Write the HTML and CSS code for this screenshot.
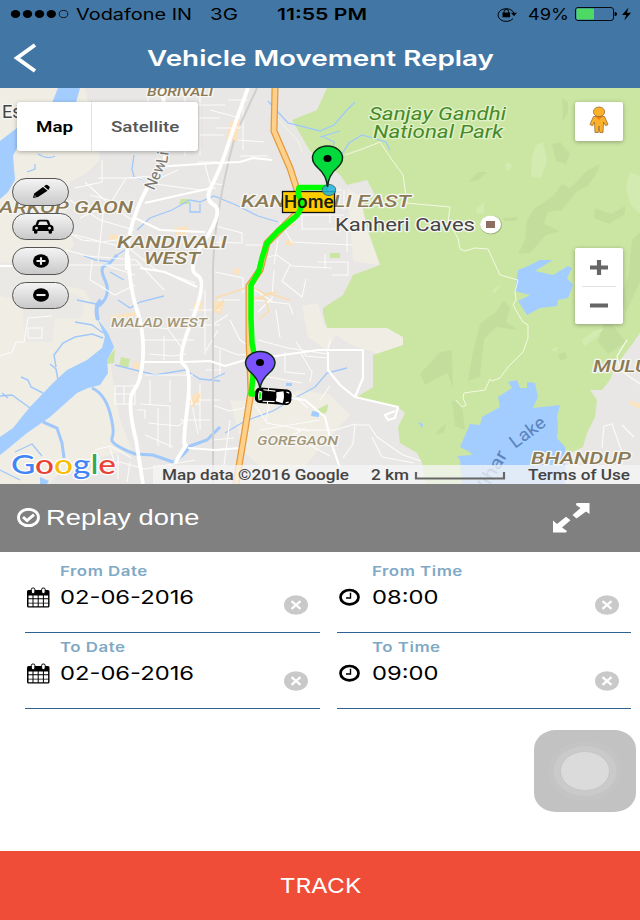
FILE: index.html
```html
<!DOCTYPE html>
<html lang="en">
<head>
    <meta charset="UTF-8">
    <meta name="viewport" content="width=device-width, initial-scale=1.0">
    <title>Vehicle Movement Replay</title>
    <link rel="stylesheet" href="styles.css">
</head>
<body>

    <div class="app">
        <header class="header">
            <div class="status">
                <svg class="signal" width="60" height="12" viewBox="0 0 60 12">
                    <ellipse cx="5.5" cy="6" rx="4.7" ry="4"/><ellipse cx="17.5" cy="6" rx="4.7" ry="4"/>
                    <ellipse cx="29.5" cy="6" rx="4.7" ry="4"/><ellipse cx="41.3" cy="6" rx="4.7" ry="4"/>
                    <ellipse cx="53.5" cy="6" rx="4.3" ry="3.6" fill="none" stroke="#000" stroke-width=".8"/>
                </svg>
                <svg class="status-text" width="420" height="28" viewBox="70 0 420 28">
                    <text x="76" y="20" textLength="116" lengthAdjust="spacingAndGlyphs">Vodafone IN</text>
                    <text x="210" y="20" textLength="28" lengthAdjust="spacingAndGlyphs">3G</text>
                    <text class="time" x="277" y="20" textLength="90" lengthAdjust="spacingAndGlyphs">11:55 PM</text>
                </svg>
                <svg class="battery" width="144" height="28" viewBox="490 0 144 28">
                    <path d="M513 18.600a8.200 6.400 0 1 1 1-5.500" fill="none" stroke="#000" stroke-width="1"/>
                    <path d="M511 12.700h6l-3 3.600z"/>
                    <path d="M502.500 12.500h7.600v4.800h-7.600z"/>
                    <path d="M504 13v-1.500a2.300 2 0 0 1 4.600 0V13" fill="none" stroke="#000" stroke-width="1"/>
                    <text x="528" y="20" textLength="41" lengthAdjust="spacingAndGlyphs">49%</text>
                    <rect x="575.5" y="7.5" width="38" height="13" rx="2.5" fill="none" stroke="#000" stroke-width=".9"/>
                    <rect x="576.5" y="8.5" width="17.5" height="11" rx="1" fill="#4cd964"/>
                    <path d="M614.600 11.700q2.500.6 2.500 2.300t-2.500 2.300z"/>
                    <path d="M628.500 7.500l-6.500 7.500h4.200l-2 5.500 6.900-7.700h-4.200z"/>
                </svg>
            </div>
            <div class="titlebar">
                <svg class="back" width="26" height="30" viewBox="0 0 26 30">
                    <path d="M23 2L5 15 23 28" fill="none" stroke="#fff" stroke-width="4"/>
                </svg>
                <h1><span class="wide">Vehicle Movement Replay</span></h1>
            </div>
        </header>

        <div class="map">
            <svg class="map-canvas" viewBox="0 88 640 396" width="640" height="396">
                <!-- land -->
                <rect x="0" y="88" width="640" height="396" fill="#e8e7e5"/>
                <path class="sand" d="M0 88H85L98 150 100 160 88 172 70 182 66 215 74 245 60 262 62 285 84 290 98 312 108 340 112 375 120 420 132 450 110 455 62 470 50 484H0z"/>
                <path fill="#e8e7e5" d="M0 262H62V290L84 298 82 318 55 318 52 342 26 342 24 330 22 300 0 296z" opacity=".8"/>
                <path class="sand" d="M230 400l40 3 30-13 30 5 20 20-20 22-26 30-34 6-26-20zM302 306l16-3 6 22 14 4-10 22-20-14zM327 328h60l16 9v8l-24 9-30-10zM347 188l20 12 14 40-2 25-26-4z"/>
                <path fill="#fbe3c0" d="M230 122l10-3-2 16-12 4zM110 316l25-4v4l-24 3zM110 234l12 2-2 5-10-1zM174 228l14-2-2 9-10 2zM234 268l6 1-2 6h-5zM192 396l10-6v12l-14 2zM195 300l8 2-2 10-8-2zM133 362h7v7h-7zM228 130h9v12h-9zM629 400l11 4v5l-10-5zM285 240l8 1v5l-8-1zM213 300l12 3-5 12-8-6z"/>

                <!-- national park -->
                <path class="park" d="M327 88L317 110 292 120 310 151 340 175 347 185 367 180 375 195 362 205 368 231 380 265 353 275 343 295 323 308V314L327 328H387L403 337V345L373 355V387L357 397 398 407 405 413 398 427 400 443 417 453 422 463 426 484H562L563 457 583 447 587 433 595 417 597 400 590 390 602 390 610 380 615 367 633 343 640 333V88z"/>
                <path class="park" d="M181 199h8v5h-10zM107 358l8-9-1 14-7 1zM121 357l9 2-2 9-9-2zM330 253h10v5h-10zM316 410l12-6-1 8-7 3z"/>
                <path fill="#c3de9c" d="M552 144l8-2 10 12-4 10-10-3zM588 170l12-6-4 10-8 12-12 6-14 18-14 2-4 12 16 7-14 4-16 18-12 1 7-14 2-20 8-12 18-12 9-12 8 4 10-10zM595 208l16 6 14-8v8l-16 10-15-6zM562 98l6 4v10l-5 10zM468 182l10-10h9l-8 8zM503 218l16-1-3 4h-12zM480 324l16-12 8-12 6 8-4 14 12 8-22-3-12 12-4 38-12 4 4-25zM420 374l20-22 12-2 1 38-6-15-22 12zM632 240l8-8v50l-14 30-6-14 8-20zM606 314l10-10-4 20 14 18-18 12-10-12zM452 400l10 6 3 24-10-4zM438 430l8-6-2 8-8 3zM558 354l8-2 1 6-7 3z"/>
                <path fill="#d3ebb1" d="M535 146l8-4 4 18-6 18-10-1 1-20zM508 162l4 4-5 6-2-8zM476 208l8-5v10l-7 1zM630 172l10 4v38l-10-10-4-18zM582 340l10-8 12-4-8 10-12 8zM550 350l8-3-2 5zM492 290l10-6-8 10z"/>

                <!-- water -->
                <path class="water" d="M58 88H80L74 110 17 148 13 156 15 180 8 192 0 199V141L17 128 50 108z"/>
                <path class="water" d="M97 318L108 333 114 347 107 360 108 373 100 385 88 388 77 393 50 417 27 433 10 447 0 455V437L13 428 30 407 53 383 67 370 87 360 102 348 105 337z"/>
                <path class="water" d="M518 270L528 266 540 260 553 260 535 271 553 275 568 266 572 268 567 278 573 285 568 298 558 300 557 306 540 308 527 315 518 301 530 295 515 291z"/>
                <path class="water" d="M470 424L480 425 482 417 500 407 498 397 512 388 508 382 517 380 520 388H527V382L535 383 538 397 533 408 560 405 557 417 558 427 557 438 565 447V484H462L460 460 457 456 472 455 470 452 460 447z"/>
                <path class="water" d="M312 411l7 1v5l-8-1zM286 383h6v3h-6zM40 477l9 4-2 3h-7zM418 422l5 2-1 4zM44 228l12-2 2 12-12 2z"/>
                <g class="creek">
                    <path d="M98 320Q94 306 101 300" stroke-width="4"/>
                    <path d="M99 306Q112 295 105 280T108 265L117 255" stroke-width="3"/>
                    <path d="M92 388Q105 394 110 413T112 438 135 454L153 455 173 462Q184 456 190 446L207 440 220 427" stroke-width="3"/>
                    <path d="M43 422L57 428 62 443 64 458" stroke-width="3"/>
                    <path d="M58 380L56 369 50 364M56 367L54 355 63 343 75 337 92 334 103 338M75 322L92 325 103 333M43 393L31 387 28 380 21 377M30 408L12 395 0 396M8 398L2 393" stroke-width="1.500"/>
                    <path d="M117 255L125 250M112 262L96 260 84 256M137 230L150 218 172 210 190 200 200 202 214 196 236 205 258 216 268 219 278 222M190 202v10h10v-8M134 155l-2 14 2 8 22 6M38 154q10 6 17 2M27 172l8-3v-5M110 272l14 8M77 300L96 304M118 300l12 8 10-6 24-6M115 365l40 10 30-5 15 9 20 2M210 380l15-7M225 433l20-12 28-10 20-12 22-12 12-14 20-5M268 101l20 22 32 8 14-6 12-14 9-9M322 136l12 6-2 10-12 4M340 157l9-14 13-8 24 7 4 8M0 470l20 10M15 452l17-8 10 12M340 131l-20 6"/>
                </g>

                <!-- minor roads -->
                <g class="minor">
                    <path d="M102 160V182L75 188M85 182L110 205 135 222M98 178H140L155 184 200 190 216 188M104 205L98 262M80 218l30-14 16-26 28-2M75 235l55 14 25 20 40 14M66 250l22 6 48 4 28 30M60 265h80M92 260l-2 20 25 15 20-10M105 265l30 10M70 200l30 20 34 10M90 195l44 12M60 228l22 12 20 2 28-4"/>
                    <path d="M148 88v14M165 88v70M185 88v68M200 95v60M198 118h22M200 135h24M210 110l30 8M198 162h20M160 178l18-8M205 165l5 18 14 2M215 128h26M228 100h20M238 140l26 2M240 156h28M243 100v50M195 105h30"/>
                    <path d="M115 386h20v18h-20zM115 394h20M124 386v18M137 410h8v9M140 404l30 2v42M148 423l30 3 8-6M158 408v38M190 404h10v26M180 420h30M190 394l8 40M138 325l30 4 16 22M150 354l22 2 14-2M144 340h50M164 336v24M196 325h24M190 310h30M205 290v60M218 330l-14 24M145 375h48M150 380v25M170 380v22M205 370h16M200 400h20M200 384v30M145 435l28 12M97 455l10 18M110 448l6 20M90 470l30-8 25 7 50-9M95 450l15-4 22 12M118 455v24M130 462l-3 20"/>
                    <path d="M212 225l30 8v10l-30-1M220 236v14M245 245h22M262 258l15-3 15 11 40 2M280 222l12 20 60 3M302 215v14h38M330 187v36M298 215h46M344 190v20M310 190h32M347 220v32M325 254v14M318 262h30v13h-16M290 265l-8 16 20 16 4-18M274 270l-2 28-14 14M255 300l34 4 4 10M278 240l-4 24M255 290l18 12M218 300h22M215 272l28 6v15M230 320l10 20 18 12M258 340l30 8 40 6M276 310l4 28M296 342l10 14 22 2M285 352v20l20 2M300 352l12 20-2 10M258 375l44 8M212 325l16-10M212 345l26 10 12-1M220 350v25M330 340l-3 14"/>
                    <path d="M255 405l12 18 42 8M270 400l-4 20M260 430l60-10M230 420l-6 45M212 440l22-2M212 405l18 6 18-4M285 440l20-12M290 392l18 16M320 400l10-14M295 430l40 0 20-6-2 20-10 14M355 425h14l8 12 26 18 18 6M372 437l10 20 32 6M300 440l30 16M640 384l-20-14-3-14 10-16M602 448l2-22 8-2 10 28M622 425l12 12M0 356l12-4 4-10h8l4-24 24-2M28 328h14v10H28z"/>
                </g>
                <g class="trail">
                    <path d="M274 115L280 121 298 141 302 152M345 155L365 148 380 142 390 157 403 175 406 196M406 203L450 207 448 222 458 238 460 249 465 251 475 248 488 249 500 275 518 280M518 280L515 292 516 300 513 305 517 312 523 322 528 325 528 338 523 352 508 367 500 378 492 381 490 379 485 390 464 393 463 398 466 405 462 407 456 400"/>
                </g>
                <path d="M257 88L240 125M234 140Q214 215 213 270V484" stroke="#cfcfd0" stroke-width="2" fill="none"/>

                <!-- main roads -->
                <g class="road">
                    <path d="M127 270Q125 240 137 210T160 170 162 88M128 255Q130 290 137 310T143 355 134 390 136 440L143 484" stroke-width="3.800"/>
                    <path d="M248 88Q236 120 228 145T212 185 214 205 205 240 197 275 192 320 184 365 187 410 186 445L175 463" stroke-width="3.800"/>
                    <path d="M155 167L215 163 240 162 253 158 272 160M145 203L180 195 212 188M133 217L160 230 205 232M140 268L165 272 197 287M143 362H184L210 361 225 366 245 360 290 354 318 350 363 350V378L355 397M328 352V370L340 385 355 397 398 407 395 418 388 420 385 415 395 411M290 398L305 400 325 417 332 445 340 468M188 448L215 450 240 448M0 266H20M210 200l8 10" stroke-width="2.200"/>
                </g>
                <g class="lane">
                    <path d="M215 298l36-12 14 8 12-2M224 300l-10 12M262 258l-2 14M253 297l12 2 4 12-10 8M200 395l-8 12M283 228l12-4M252 300L270 294 290 300"/>
                </g>
                <path d="M275 88L274 131 290 168 298 193 296 214 267 243 260 270 249 286 249 340 251 392 245 430 236 484" fill="none" stroke="#e39a3d" stroke-width="7"/>
                <path d="M275 88L274 131 290 168 298 193 296 214 267 243 260 270 249 286 249 340 251 392 245 430 236 484" fill="none" stroke="#fed08a" stroke-width="4.500"/>

                <!-- place names -->
                <g class="area">
                    <text x="147" y="96" font-size="12" textLength="66" lengthAdjust="spacingAndGlyphs">BORIVALI</text>
                    <text x="-1" y="213" font-size="17" textLength="134" lengthAdjust="spacingAndGlyphs">ARKOP GAON</text>
                    <text x="117" y="248" font-size="17" textLength="110" lengthAdjust="spacingAndGlyphs">KANDIVALI</text>
                    <text x="144" y="264" font-size="17" textLength="56" lengthAdjust="spacingAndGlyphs">WEST</text>
                    <text x="241" y="207" font-size="17" textLength="170" lengthAdjust="spacingAndGlyphs">KANDIVALI EAST</text>
                    <text class="pale" x="111" y="327" font-size="13" textLength="96" lengthAdjust="spacingAndGlyphs">MALAD WEST</text>
                    <text class="pale" x="257" y="445" font-size="13.500" textLength="81" lengthAdjust="spacingAndGlyphs">GOREGAON</text>
                    <text x="593" y="372" font-size="17" textLength="70" lengthAdjust="spacingAndGlyphs">MULUN</text>
                    <text x="531" y="464" font-size="17" textLength="100" lengthAdjust="spacingAndGlyphs">BHANDUP</text>
                </g>
                <g class="park-name">
                    <text x="369" y="120" textLength="137" lengthAdjust="spacingAndGlyphs">Sanjay Gandhi</text>
                    <text x="373" y="138" textLength="130" lengthAdjust="spacingAndGlyphs">National Park</text>
                </g>
                <g class="place">
                    <text x="2" y="118" font-size="18" textLength="64" lengthAdjust="spacingAndGlyphs">Essel W</text>
                    <text x="335" y="231" font-size="19" textLength="140" lengthAdjust="spacingAndGlyphs">Kanheri Caves</text>
                    <text class="street" transform="translate(154 191) rotate(-66)" textLength="30" lengthAdjust="spacingAndGlyphs">New</text>
                    <text class="street" transform="translate(167 164) rotate(-82)" textLength="28" lengthAdjust="spacingAndGlyphs">Link</text>
                </g>
                <text class="lake" transform="translate(483 498) rotate(-60)" textLength="50" lengthAdjust="spacingAndGlyphs">Vihar</text>
                <text class="lake" transform="translate(515 449) rotate(-37)" textLength="40" lengthAdjust="spacingAndGlyphs">Lake</text>
                <ellipse cx="491" cy="225" rx="11" ry="9.500" fill="#000" opacity=".2"/>
                <ellipse cx="490.500" cy="224.500" rx="10.500" ry="9" fill="#fff"/>
                <rect x="486" y="221" width="9" height="7" fill="#8d6e63"/>

                <!-- replayed route -->
                <rect x="282.500" y="191.500" width="52" height="21" fill="#fc0" stroke="#111" stroke-width="1.300"/>
                <path d="M328 187.500H299L298 194 302 203Q300 214 294 218L278 231 267 243 262 258 259 271 251 285V318L252 343 254 353 253 377 251 394 259 394" fill="none" stroke="#0f0" stroke-width="5.500" stroke-linejoin="round"/>
                <text class="home" x="284" y="208" textLength="50" lengthAdjust="spacingAndGlyphs">Home</text>
                <ellipse cx="329" cy="190" rx="6.800" ry="5.600" fill="#1fb4dc" fill-opacity=".85" stroke="#35606b" stroke-width=".8"/>
                <path class="pin" fill="#02d93c" d="M327.500 187Q326.500 175 318 168 312.500 163 312.500 158A15 12 0 0 1 342.500 158Q342.500 163 337 168 328.500 175 327.500 187z"/>
                <ellipse cx="327.500" cy="158.500" rx="4" ry="3.500"/>
                <g transform="translate(273 396.500) rotate(4)">
                    <rect x="-18" y="-8" width="36.500" height="15.500" rx="5"/>
                    <path d="M-14-5l3 1v8l-3 1q-2-5 0-10zM3-4.500l7-1.500q2 6 0 12L3 4.500q1-4 0-9z" fill="#fff"/>
                    <path d="M-10-6L2-5.500M-10 5.500L2 5M-5-8v3M-5 8V5M13-5.500l3 1M13 5.500l3-1" stroke="#fff" stroke-width="1.100"/>
                    <path d="M-14-4l2 1v6l-2 1z" fill="#0f0"/>
                </g>
                <path class="pin" fill="#7b52ff" d="M260 389Q259 380 251 372.500 245.500 368 245.500 362.500A14.800 12 0 0 1 275 362.500Q275 368 269.500 372.500 261 380 260 389z"/>
                <ellipse cx="260" cy="362.500" rx="4" ry="3.500"/>

                <!-- attribution -->
                <rect x="153" y="465" width="487" height="19" fill="#f5f5f5" opacity=".75"/>
                <g class="credits">
                    <text x="162" y="480" textLength="187" lengthAdjust="spacingAndGlyphs">Map data ©2016 Google</text>
                    <text x="371" y="480" textLength="38" lengthAdjust="spacingAndGlyphs">2 km</text>
                    <text x="528" y="480" textLength="102" lengthAdjust="spacingAndGlyphs">Terms of Use</text>
                </g>
                <path d="M416 472v6.500h88V472" fill="none" stroke="#666" stroke-width="2.200"/>
                <text class="google" x="11" y="474" textLength="105" lengthAdjust="spacingAndGlyphs"><tspan fill="#4285f4">G</tspan><tspan fill="#ea4335">o</tspan><tspan fill="#fbbc05">o</tspan><tspan fill="#4285f4">g</tspan><tspan fill="#34a853">l</tspan><tspan fill="#ea4335">e</tspan></text>
            </svg>

            <div class="map-type">
                <button class="active"><span class="wide">Map</span></button>
                <button><span class="wide">Satellite</span></button>
            </div>

            <div class="tools">
                <button><svg width="18" height="15" viewBox="0 0 18 15"><path d="M1 14l1.200-4.500L11 3l4.500 3.800L6 13z"/><path d="M12 2.200L13.800 1q1-.6 2 .2l1.500 1.400q.9.9 0 1.700L16.300 6z"/><path d="M2.500 12.700l1.600-.5-1.200-1z" fill="#ddd"/></svg></button>
                <button class="tool-wide"><svg width="22" height="15" viewBox="0 0 22 15"><path fill-rule="evenodd" d="M3.500 6L5 2Q5.600.8 7.500.8h7Q16.400.8 17 2l1.500 4Q21.500 6.300 21.500 9v3H20v1.500q0 1.300-1.700 1.300T16.600 13.500V12H5.400v1.500q0 1.300-1.700 1.300T2 13.500V12H.5V9Q.5 6.300 3.500 6zM6 6h10l-1.200-3q-.2-.5-.8-.5H8q-.6 0-.8.5zM4.500 7.800a1.500 1.300 0 1 0 .1 0zM17.500 7.800a1.500 1.300 0 1 0 .1 0z"/></svg></button>
                <button><svg width="16" height="14" viewBox="0 0 16 14"><ellipse cx="8" cy="7" rx="8" ry="6.700"/><path d="M3.500 7h9M8 3.200v7.600" stroke="#eee" stroke-width="2.100"/></svg></button>
                <button><svg width="16" height="14" viewBox="0 0 16 14"><ellipse cx="8" cy="7" rx="8" ry="6.700"/><path d="M3.500 7h9" stroke="#eee" stroke-width="2.100"/></svg></button>
            </div>

            <div class="pegman">
                <svg width="20" height="28" viewBox="0 0 20 28" fill="#fbb22a" stroke="#9a6a2c" stroke-width=".8">
                    <path d="M4.500 10.500h11l3.500 8-2.500 1.200-2-3.700-.5 10.500h-3.200L10 20l-.8 6.500H6L5.500 16l-2 3.700L1 18.500z"/>
                    <path d="M6.500 10.500h7L10 14z" fill="#ef7d1a" stroke="none"/>
                    <ellipse cx="10" cy="5.800" rx="5.600" ry="4.800"/>
                </svg>
            </div>

            <div class="zoom">
                <button><svg width="18" height="15" viewBox="0 0 18 15"><path d="M0 7.500h18M9 0v15" stroke="#666" stroke-width="4.200"/></svg></button>
                <button><svg width="18" height="15" viewBox="0 0 18 15"><path d="M0 7.500h18" stroke="#666" stroke-width="4"/></svg></button>
            </div>
        </div>

        <div class="replay">
            <svg width="24" height="20" viewBox="0 0 24 20"><ellipse cx="11.500" cy="9.500" rx="10" ry="8.200" fill="none" stroke="#fff" stroke-width="2.800"/><path d="M6 9l4 3.600 7-6" fill="none" stroke="#fff" stroke-width="3"/></svg>
            <span class="wide">Replay done</span>
            <svg class="expand" width="38" height="32" viewBox="0 0 38 32" fill="#fff"><path d="M23.500 1H36.500V12L33 9.500 23.500 16.500 19.500 13 27.500 6 23 3z"/><path d="M0 18.500L4 22 13 14.800 17.500 18.300 9 25.500 14 29 13 30.500H0z"/></svg>
        </div>

        <form class="fields">
            <div class="field">
                <svg width="24" height="22" viewBox="0 0 24 22"><use href="#calendar"/></svg>
                <label><span class="wide">From Date</span></label>
                <output><span class="wide">02-06-2016</span></output>
                <svg class="clear" width="24" height="20" viewBox="0 0 24 20"><use href="#clear"/></svg>
            </div>
            <div class="field">
                <svg width="24" height="22" viewBox="0 0 24 22"><use href="#clock"/></svg>
                <label><span class="wide">From Time</span></label>
                <output><span class="wide">08:00</span></output>
                <svg class="clear" width="24" height="20" viewBox="0 0 24 20"><use href="#clear"/></svg>
            </div>
            <div class="field">
                <svg width="24" height="22" viewBox="0 0 24 22"><use href="#calendar"/></svg>
                <label><span class="wide">To Date</span></label>
                <output><span class="wide">02-06-2016</span></output>
                <svg class="clear" width="24" height="20" viewBox="0 0 24 20"><use href="#clear"/></svg>
            </div>
            <div class="field">
                <svg width="24" height="22" viewBox="0 0 24 22"><use href="#clock"/></svg>
                <label><span class="wide">To Time</span></label>
                <output><span class="wide">09:00</span></output>
                <svg class="clear" width="24" height="20" viewBox="0 0 24 20"><use href="#clear"/></svg>
            </div>
        </form>

        <button class="track"><span class="wide">TRACK</span></button>

        <svg class="touch" width="102" height="82" viewBox="0 0 102 82">
            <rect width="102" height="82" rx="22" ry="19" fill="#c2c2c2"/>
            <ellipse cx="51" cy="41" rx="37" ry="30" fill="#c4c4c4"/>
            <ellipse cx="51" cy="41" rx="31.500" ry="25" fill="#cacaca"/>
            <ellipse cx="51" cy="41" rx="24.500" ry="19.500" fill="#dbdbdb" stroke="#c3c3c3" stroke-width=".8"/>
        </svg>
    </div>

    <!-- shared field icons -->
    <svg width="0" height="0" class="defs">
        <symbol id="calendar" viewBox="0 0 24 22">
            <rect x="1" y="3" width="22.500" height="17.500" rx="1.500"/>
            <path d="M2.500 8.500h4v2.800h-4zM7.500 8.500h4.200v2.800H7.500zM12.700 8.500h4.200v2.800h-4.200zM17.900 8.500h4.200v2.800h-4.200zM2.500 12.300h4v3.400h-4zM7.500 12.300h4.200v3.400H7.500zM12.700 12.300h4.200v3.400h-4.200zM17.900 12.300h4.200v3.400h-4.200zM2.500 16.500h4v2.700h-4zM7.500 16.500h4.200v2.700H7.500zM12.700 16.500h4.200v2.700h-4.200zM17.900 16.500h4.200v2.700h-4.200z" fill="#fff"/>
            <rect x="5.300" y="1" width="3.600" height="5.500" rx="1.500" fill="#fff" stroke="#000"/>
            <rect x="15.600" y="1" width="3.600" height="5.500" rx="1.500" fill="#fff" stroke="#000"/>
        </symbol>
        <symbol id="clock" viewBox="0 0 24 22">
            <ellipse cx="11.500" cy="10.200" rx="9" ry="7.200" fill="none" stroke="#000" stroke-width="2.700"/>
            <path d="M12.500 5.700V11H8" fill="none" stroke="#000" stroke-width="1.400"/>
        </symbol>
        <symbol id="clear" viewBox="0 0 24 20">
            <ellipse cx="12" cy="10" rx="12" ry="9.800" fill="#c9c9c9"/>
            <path d="M7.500 6.200l9 7.600M16.500 6.200l-9 7.600" stroke="#fff" stroke-width="2.200"/>
        </symbol>
    </svg>

</body>
</html>
```
FILE: styles.css
```css
* {
    box-sizing: border-box;
}
body {
    margin: 0;
    font-family: Inter, "Liberation Sans", sans-serif;
    background: white;
}
button {
    border: 0;
    padding: 0;
    background: none;
    font-family: inherit;
}
svg {
    flex: none;
    display: block;
}
.app {
    position: relative;
    display: flex;
    flex-direction: column;
    width: 640px;
    height: 920px;
    overflow: hidden;
}
/* extended letterforms used all over the app */
.wide {
    display: inline-block;
    white-space: nowrap;
    transform: scaleX(1.25);
    transform-origin: 0 50%;
}
.header {
    height: 88px;
    background: #4277a5;
}
.status {
    display: flex;
    align-items: center;
    height: 28px;
    padding-left: 10px;
    font-size: 16.5px;
}
.time {
    font-weight: 600;
}
.titlebar {
    display: flex;
    align-items: center;
    height: 60px;
    padding-left: 12px;
}
.titlebar h1 {
    margin: 0 0 0 109px;
    font-size: 22px;
    font-weight: 600;
    color: white;
}
.titlebar .wide {
    transform: scaleX(1.265);
}
.map {
    position: relative;
    height: 396px;
    overflow: hidden;
}
.sand {
    fill: #f0ede4;
}
.park {
    fill: #cbe6a3;
}
.water {
    fill: #a3ccff;
}
.creek {
    fill: none;
    stroke: #a0c8fa;
    stroke-width: 1.3;
}
.minor {
    fill: none;
    stroke: #fbfbfa;
    stroke-width: 1.1;
}
.trail {
    fill: none;
    stroke: #f4f8e4;
    stroke-width: 1;
}
.road {
    fill: none;
    stroke: white;
    stroke-linejoin: round;
}
.lane {
    fill: none;
    stroke: #fbdcae;
    stroke-width: 1.5;
}
.area text, .park-name, .place, .google {
    paint-order: stroke;
    stroke: #f7f6f2;
    stroke-width: 2.5px;
    stroke-linejoin: round;
}
.area {
    font-family: Roboto, sans-serif;
    font-style: italic;
    font-weight: 500;
    fill: #8a7a55;
}
.area .pale {
    fill: #a3977a;
}
.park-name {
    font: italic 18.5px Roboto, sans-serif;
    fill: #468a28;
    stroke: #e2f2c8;
}
.place {
    font-family: Roboto, sans-serif;
    fill: #444;
}
.street {
    font-size: 16px;
    fill: #777;
}
.lake {
    font: 18px Roboto, sans-serif;
    fill: #5b83bd;
}
.home {
    font-size: 17px;
    font-weight: 600;
    fill: #14200a;
}
.pin {
    stroke: #0b2c14;
    stroke-width: 1.5;
}
.credits {
    font: 500 14px Roboto, sans-serif;
    fill: #444;
}
.google {
    font: 500 27px Lato, sans-serif;
    stroke: white;
}
.map-type {
    position: absolute;
    left: 17px;
    top: 14px;
    display: flex;
    width: 181px;
    height: 49px;
    background: white;
    border-radius: 3px;
    box-shadow: 0 1px 4px rgba(0, 0, 0, .3);
}
.map-type button {
    flex: 1;
    padding-left: 19px;
    text-align: left;
    font: 500 15.5px Roboto, sans-serif;
    color: #565656;
}
.map-type .wide {
    transform: scaleX(1.21);
}
.map-type .active {
    flex: none;
    width: 75px;
    border-right: 1px solid #e4e4e4;
    font-weight: 600;
    color: black;
}
.tools {
    position: absolute;
    left: 12px;
    top: 90px;
    display: flex;
    flex-direction: column;
    align-items: flex-start;
    gap: 7px;
}
.tools button {
    display: flex;
    align-items: center;
    justify-content: center;
    width: 57px;
    height: 27.5px;
    border: 1.5px solid #555;
    border-radius: 15px;
    background: linear-gradient(#f4f4f4, #c9c9c9);
}
.tools .tool-wide {
    width: 62px;
}
.pegman, .zoom {
    position: absolute;
    left: 575px;
    width: 48px;
    background: white;
    border-radius: 2px;
    box-shadow: 0 1px 4px rgba(0, 0, 0, .3);
}
.pegman {
    top: 14px;
    display: flex;
    justify-content: center;
    height: 39px;
    padding-top: 4px;
}
.zoom {
    top: 160px;
    height: 76px;
    padding: 0 7px;
}
.zoom button {
    display: flex;
    align-items: center;
    justify-content: center;
    width: 34px;
    height: 38px;
}
.zoom button + button {
    border-top: 1px solid #e3e3e3;
}
.replay {
    display: flex;
    align-items: center;
    gap: 5px;
    height: 68px;
    padding: 0 49px 0 17px;
    background: #808080;
    font: 21.5px "Liberation Sans", sans-serif;
    color: white;
}
.replay .wide {
    transform: scaleX(1.27);
}
.expand {
    margin-left: auto;
}
.fields {
    flex: 1;
    display: grid;
    grid-template-columns: 295px 294px;
    grid-auto-rows: 76px;
    column-gap: 17px;
    padding: 5px 0 0 25px;
}
.field {
    display: grid;
    grid-template-columns: 24px 1fr 24px;
    grid-template-rows: 29px 24px;
    column-gap: 10.5px;
    padding-right: 12px;
    border-bottom: 1.5px solid #2f6291;
}
.field > svg {
    grid-area: 2 / 1;
    align-self: center;
    margin-left: 1px;
}
.field label {
    grid-area: 1 / 2;
    line-height: 28px;
    font-size: 13.5px;
    font-weight: 600;
    letter-spacing: .4px;
    color: #7fa9c6;
}
.field output {
    grid-area: 2 / 2;
    line-height: 24px;
    font-size: 19px;
}
.field .clear {
    grid-area: 2 / 3;
    align-self: start;
    margin: 9px 0 0;
}
.track {
    height: 69px;
    background: #ef4d37;
    font-size: 20px;
    color: white;
}
.track .wide {
    transform: scaleX(1.22);
    transform-origin: 50% 50%;
}
.touch {
    position: absolute;
    left: 534px;
    top: 730px;
}
.defs {
    position: absolute;
}
```
